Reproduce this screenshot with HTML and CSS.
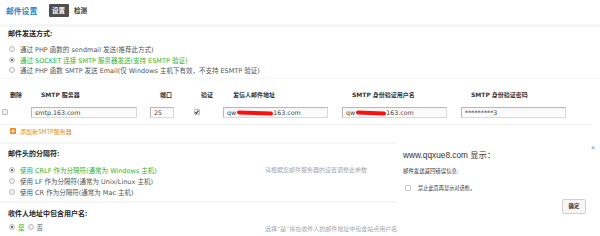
FILE: index.html
```html
<!DOCTYPE html>
<html lang="zh-CN">
<head>
<meta charset="utf-8">
<title>邮件设置</title>
<link rel="stylesheet" href="styles.css">
</head>
<body>
<div class="page">
  <div class="header">
    <span class="title">邮件设置</span>
    <span class="tab active">设置</span>
    <span class="tab">检测</span>
  </div>

  <div class="section s1">
    <div class="label">邮件发送方式:</div>
    <div class="opts">
      <div class="opt"><span class="radio"></span>通过 PHP 函数的 sendmail 发送(推荐此方式)</div>
      <div class="opt green"><span class="radio on"></span>通过 SOCKET 连接 SMTP 服务器发送(支持 ESMTP 验证)</div>
      <div class="opt"><span class="radio"></span>通过 PHP 函数 SMTP 发送 Email(仅 Windows 主机下有效，不支持 ESMTP 验证)</div>
    </div>
  </div>

  <div class="section smtp">
    <div class="grid head">
      <span>删除</span>
      <span>SMTP 服务器</span>
      <span>端口</span>
      <span>验证</span>
      <span>发信人邮件地址</span>
      <span>SMTP 身份验证用户名</span>
      <span>SMTP 身份验证密码</span>
    </div>
    <div class="grid row">
      <span class="cell"><span class="check"></span></span>
      <span class="cell"><span class="input w106">smtp.163.com</span></span>
      <span class="cell"><span class="input w24">25</span></span>
      <span class="cell"><span class="check on"></span></span>
      <span class="cell"><span class="input w105">qw<span class="redact r1"></span><span class="after1">163.com</span></span></span>
      <span class="cell"><span class="input w105">qw<span class="redact r2"></span><span class="after2">163.com</span></span></span>
      <span class="cell"><span class="input w105">*********3</span></span>
    </div>
    <div class="add"><span class="plus">+</span>添加新SMTP服务器</div>
  </div>

  <div class="section s2">
    <div class="label">邮件头的分隔符:</div>
    <div class="body">
      <div class="opts">
        <div class="opt green"><span class="radio on"></span>使用 CRLF 作为分隔符(通常为 Windows 主机)</div>
        <div class="opt"><span class="radio"></span>使用 LF 作为分隔符(通常为 Unix/Linux 主机)</div>
        <div class="opt"><span class="radio"></span>使用 CR 作为分隔符(通常为 Mac 主机)</div>
      </div>
      <div class="hint">请根据您邮件服务器的设置调整此参数</div>
    </div>
  </div>

  <div class="section s3">
    <div class="label">收件人地址中包含用户名:</div>
    <div class="body">
      <div class="opts inline">
        <span class="opt green"><span class="radio on"></span>是</span>
        <span class="opt"><span class="radio"></span>否</span>
      </div>
      <div class="hint">选择“是”将在收件人的邮件地址中包含站点用户名</div>
    </div>
  </div>

  <div class="dialog">
    <div class="dlg-top">
      <span class="dlg-title">www.qqxue8.com 显示：</span>
      <span class="dlg-close">×</span>
    </div>
    <div class="dlg-msg">邮件发送返回错误信息:</div>
    <div class="dlg-check"><span class="box"></span>禁止此页再显示对话框。</div>
    <div class="dlg-actions"><span class="btn">确定</span></div>
  </div>
</div>
</body>
</html>
```

FILE: styles.css
```css
html, body {
  margin: 0;
  padding: 0;
  background: #fff;
}
body {
  font-family: "DejaVu Sans", "Noto Sans CJK SC", sans-serif;
  font-size: 6.5px;
  color: #444;
}
.page {
  position: relative;
  width: 600px;
  height: 236px;
  overflow: hidden;
}
.header {
  height: 27px;
  box-sizing: border-box;
  padding: 4px 0 0 6px;
  display: flex;
  align-items: flex-start;
  border-bottom: 3px solid #f6f6f6;
}
.title {
  font-family: "Noto Sans CJK SC", sans-serif;
  font-size: 7.8px;
  font-weight: bold;
  color: #1d8bc7;
  line-height: 13px;
  width: 43px;
}
.tab {
  font-family: "Noto Sans CJK SC", sans-serif;
  font-size: 6.5px;
  font-weight: bold;
  line-height: 13px;
  color: #333;
  padding: 0 3px;
  margin-right: 2px;
}
.tab.active {
  background: #4f4f4f;
  color: #fff;
  width: 14px;
  border-radius: 1px;
}
.section {
  border-bottom: 2px solid #f6f6f6;
}
.label {
  font-family: "Noto Sans CJK SC", sans-serif;
  font-weight: bold;
  font-size: 7px;
  line-height: 10px;
  color: #222;
  padding-left: 8px;
}
.opts {
  padding-left: 9px;
}
.opt {
  display: flex;
  align-items: center;
  height: 10.5px;
  white-space: nowrap;
  color: #555;
}
.green {
  color: #2bb52b;
}
.radio {
  width: 4px;
  height: 4px;
  border: 1px solid #bcbcbc;
  border-radius: 50%;
  background: #f2f2f2;
  margin-right: 5px;
  flex: none;
  display: inline-flex;
  align-items: center;
  justify-content: center;
}
.radio.on::after {
  content: "";
  width: 2px;
  height: 2px;
  border-radius: 50%;
  background: #444;
}
.s1 {
  padding: 1px 0 2px;
  border-bottom: 1px solid #f7f7f7;
}
.s1 .opts {
  margin-top: 6px;
}
.smtp {
  padding-top: 10px;
  padding-bottom: 6px;
}
.grid {
  display: grid;
  grid-template-columns: 31px 119px 41px 32px 119px 119px 110px;
  padding-left: 10px;
}
.head {
  height: 11px;
  line-height: 11px;
  font-family: "DejaVu Sans", "Noto Sans CJK SC", sans-serif;
  font-weight: bold;
  font-size: 6px;
  color: #333;
}
.row {
  padding: 7px 0 6px;
  border-bottom: 1px solid #efefef;
  margin-right: 8px;
}
.cell {
  display: flex;
  align-items: center;
  height: 11px;
}
.check {
  width: 4px;
  height: 4px;
  border: 1px solid #bdbdbd;
  background: #f1f1f1;
  border-radius: 1px;
  margin-left: 2px;
  position: relative;
}
.check.on {
  margin-left: 3px;
}
.check.on::after {
  content: "";
  position: absolute;
  left: 1px;
  top: -0.5px;
  width: 1.2px;
  height: 2.6px;
  border: solid #333;
  border-width: 0 1.2px 1.2px 0;
  transform: rotate(40deg);
}
.input {
  position: relative;
  display: flex;
  align-items: center;
  box-sizing: border-box;
  height: 11px;
  border: 1px solid #b9b9b9;
  border-bottom-color: #dadada;
  border-right-color: #dadada;
  background: linear-gradient(#f4f4f4, #fcfcfc 40%);
  padding-left: 3px;
  color: #444;
  font-size: 6.3px;
  white-space: nowrap;
  overflow: hidden;
}
.w106 { width: 106px; }
.w24 { width: 24px; }
.w105 { width: 105px; }
.redact {
  display: inline-block;
  height: 3.5px;
  background: #ff1010;
  border-radius: 2px;
  transform: rotate(2deg);
  margin-top: 1px;
}
.r1 { width: 36px; margin-left: 1px; }
.r2 { width: 30px; margin-left: 1px; }
.after1, .after2 {
  margin-left: 0;
}
.add {
  display: flex;
  align-items: center;
  height: 10px;
  margin-top: 1.5px;
  padding-left: 10px;
  font-family: "Noto Sans CJK SC", sans-serif;
  color: #e48d1c;
  font-size: 6px;
}
.plus {
  width: 6px;
  height: 6px;
  background: #f08a16;
  color: #fff;
  font-family: "DejaVu Sans", sans-serif;
  font-weight: bold;
  font-size: 6px;
  line-height: 6px;
  text-align: center;
  margin-right: 4px;
  border-radius: 1px;
}
.s2 {
  padding: 4px 0 3.5px;
}
.s2 .body {
  margin-top: 7px;
}
.s2 .opt {
  height: 10.75px;
}
.body {
  display: flex;
  align-items: flex-start;
}
.body .opts {
  width: 256px;
  flex: none;
}
.hint {
  color: #a8a8a8;
  font-size: 6px;
  line-height: 10.75px;
  white-space: nowrap;
}
.s3 {
  padding-top: 5px;
  border-bottom: none;
}
.s3 .body {
  margin-top: 4px;
}
.s3 .hint {
  padding-top: 2px;
}
.opts.inline {
  display: flex;
  gap: 3px;
}
.opts.inline .opt {
  height: 10px;
}
.opts.inline .radio {
  margin-right: 3px;
}
.dialog {
  position: absolute;
  left: 397px;
  top: 141px;
  width: 220px;
  height: 110px;
  background: #fff;
  padding: 9px 0 0 6px;
  box-sizing: border-box;
  font-family: "Liberation Sans", "Noto Sans CJK SC", sans-serif;
  color: #333;
}
.dlg-top {
  position: relative;
  height: 11px;
}
.dlg-title {
  font-size: 8.3px;
  line-height: 11px;
  color: #333;
}
.dlg-close {
  position: absolute;
  left: 188px;
  top: -6px;
  font-size: 7px;
  color: #888;
}
.dlg-msg {
  margin-top: 6px;
  font-size: 5.4px;
  line-height: 8px;
  color: #333;
}
.dlg-check {
  margin-top: 9px;
  display: flex;
  align-items: center;
  font-size: 5.2px;
  line-height: 8px;
  color: #333;
  padding-left: 2px;
}
.box {
  width: 4px;
  height: 4px;
  border: 1px solid #c8c8c8;
  border-radius: 1px;
  margin-right: 7px;
}
.dlg-actions {
  margin-top: 7px;
  padding-left: 159px;
}
.btn {
  display: inline-block;
  box-sizing: border-box;
  width: 24px;
  height: 15px;
  line-height: 13px;
  text-align: center;
  border: 1px solid #d0d0d0;
  border-radius: 2px;
  background: #f6f6f6;
  font-size: 5.4px;
  font-weight: bold;
  color: #333;
}
```
